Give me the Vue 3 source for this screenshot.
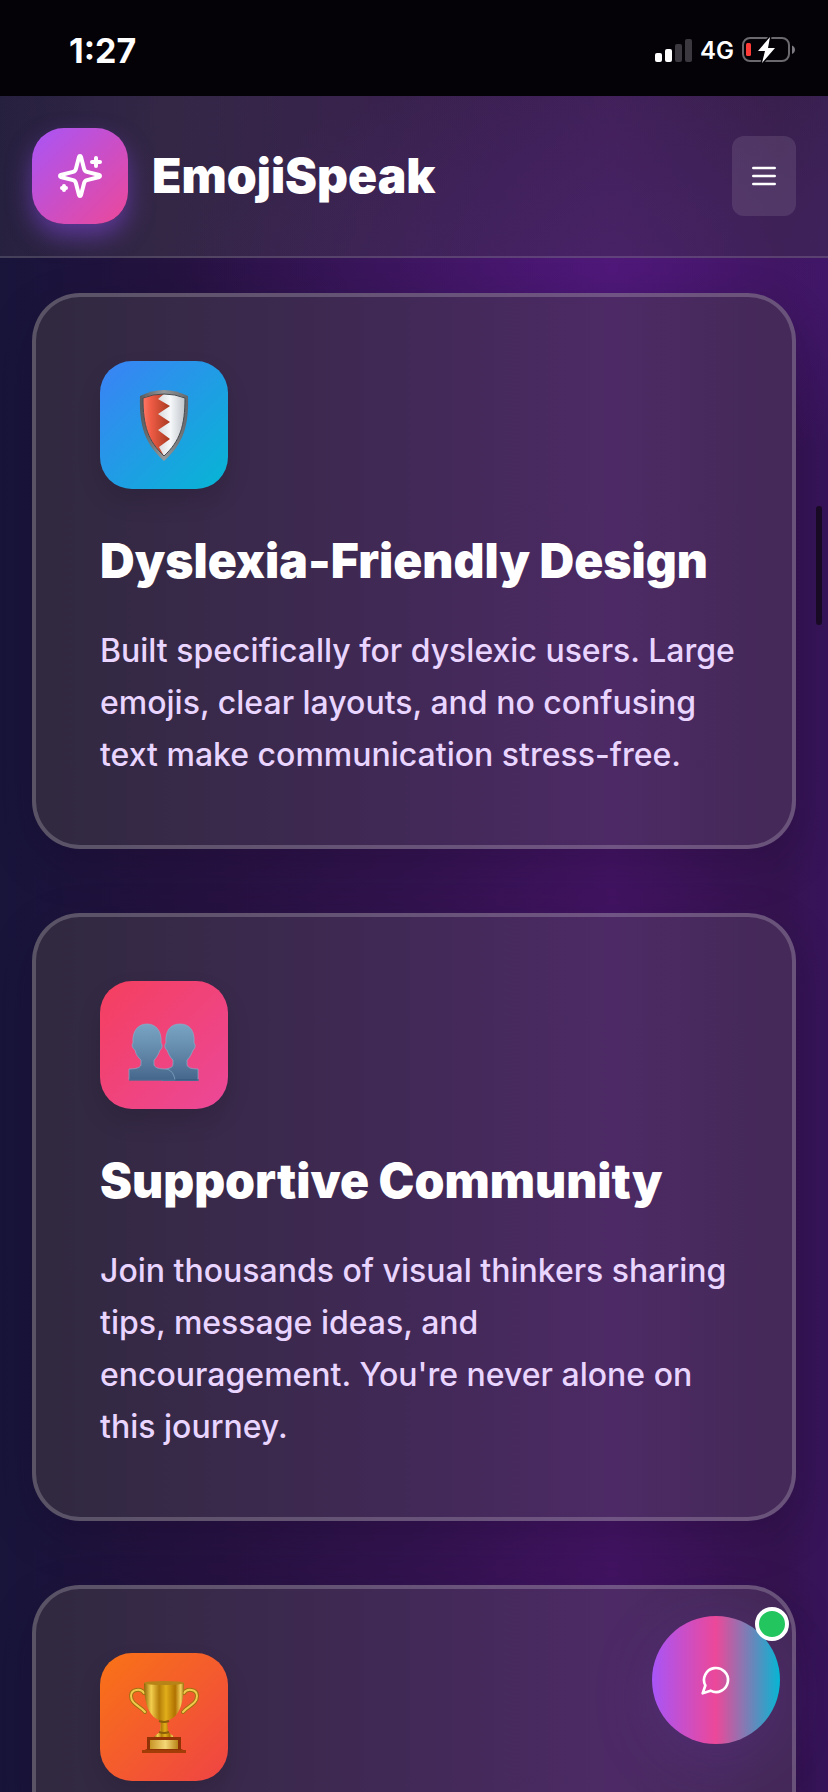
<script setup>
const features = [
  {
    icon: 'shield',
    title: 'Dyslexia-Friendly Design',
    text: 'Built specifically for dyslexic users. Large emojis, clear layouts, and no confusing text make communication stress-free.'
  },
  {
    icon: 'people',
    title: 'Supportive Community',
    text: "Join thousands of visual thinkers sharing tips, message ideas, and encouragement. You're never alone on this journey."
  },
  {
    icon: 'trophy'
  }
]
</script>

<template>
  <div class="app">
    <div class="status-bar">
      <span class="time">1:27</span>
      <div class="status-right">
        <svg class="signal" viewBox="0 0 37 24">
          <rect x="0" y="15" width="7" height="9" rx="2" fill="#fff" />
          <rect x="10" y="11" width="7" height="13" rx="2" fill="#fff" />
          <rect x="20" y="6" width="7" height="18" rx="2" fill="#3b393f" />
          <rect x="30" y="1" width="7" height="23" rx="2" fill="#3b393f" />
        </svg>
        <span class="network">4G</span>
        <svg class="battery" viewBox="0 0 54 28">
          <rect x="1" y="2" width="46" height="23" rx="7" fill="none" stroke="#6b696e" stroke-width="2" />
          <path d="M50 9.5c4 1.5 4 7 0 8.5z" fill="#7c7a80" />
          <rect x="4" y="7" width="5" height="13" rx="1.5" fill="#ff3b38" />
          <path
            d="M28 1 16 15h7l-3 12 13-15h-7z"
            fill="#fff"
            stroke="#050308"
            stroke-width="3"
            stroke-linejoin="round"
            paint-order="stroke"
          />
        </svg>
      </div>
    </div>

    <header class="header">
      <div class="brand">
        <div class="logo">
          <svg viewBox="0 0 24 24" class="line-icon logo-icon">
            <path d="M9.937 15.5A2 2 0 0 0 8.5 14.063l-6.135-1.582a.5.5 0 0 1 0-.962L8.5 9.936A2 2 0 0 0 9.937 8.5l1.582-6.135a.5.5 0 0 1 .963 0L14.063 8.5A2 2 0 0 0 15.5 9.937l6.135 1.581a.5.5 0 0 1 0 .964L15.5 14.063a2 2 0 0 0-1.437 1.437l-1.582 6.135a.5.5 0 0 1-.963 0z" />
            <path d="M20 3v4M22 5h-4M4 17v2M5 18H3" />
          </svg>
        </div>
        <span class="brand-name">EmojiSpeak</span>
      </div>
      <button class="menu-btn" type="button" aria-label="Open menu">
        <svg viewBox="0 0 24 24" class="line-icon">
          <path d="M4 6h16M4 12h16M4 18h16" />
        </svg>
      </button>
    </header>

    <main class="features">
      <article v-for="feature in features" :key="feature.icon" class="card">
        <div class="tile" :class="feature.icon">
          <svg v-if="feature.icon === 'shield'" viewBox="0 0 72 72">
            <defs>
              <linearGradient id="rim" x1="0" x2="1">
                <stop offset="0" stop-color="#575b5e" />
                <stop offset=".5" stop-color="#96989a" />
                <stop offset="1" stop-color="#63676b" />
              </linearGradient>
              <linearGradient id="red" x1="0" x2="1">
                <stop offset="0" stop-color="#ff7765" />
                <stop offset=".3" stop-color="#ee5b45" />
                <stop offset="1" stop-color="#a83a20" />
              </linearGradient>
              <linearGradient id="silver" x1="0" x2="1">
                <stop offset="0" stop-color="#b4b7ba" />
                <stop offset=".65" stop-color="#f6f8fa" />
                <stop offset="1" stop-color="#bfc4ca" />
              </linearGradient>
            </defs>
            <path d="M12 7Q24 1 36 1t24 6c1 30-5 48-24 65C17 55 11 37 12 7z" fill="url(#rim)" />
            <path d="M15 9q10-4 21-4t21 4c0 28-5 43-21 58C20 52 15 37 15 9z" fill="url(#silver)" />
            <path d="M15 9q10-4 21-4l-6 5 12 7-12 8 12 8-12 8 12 9-11 8 5 9C20 52 15 37 15 9z" fill="url(#red)" />
            <path d="M15 9q10-4 21-4t21 4c0 28-5 43-21 58C20 52 15 37 15 9z" fill="none" stroke="#454b50" />
          </svg>

          <svg v-else-if="feature.icon === 'people'" viewBox="0 0 72 72">
            <defs>
              <linearGradient id="bust" x1="0" y1="15" x2="0" y2="72" gradientUnits="userSpaceOnUse">
                <stop offset="0" stop-color="#79a4c3" />
                <stop offset=".5" stop-color="#6288a9" />
                <stop offset="1" stop-color="#44658a" />
              </linearGradient>
            </defs>
            <g fill="url(#bust)" stroke="#87adca" stroke-width=".7">
              <path d="M38 60c5-1 7-2 7-5v-4c-3-3-4-5-6-10-2-1-3-5-1-7-1-12 4-19 14-19s15 7 14 19c2 2 1 6-1 7-2 5-3 7-6 10v5c1 3 5 4 11 4v12H34z" />
              <path d="M1 60c6 0 11-1 12-4v-5c-3-3-5-5-6-10-2-1-4-5-2-7-1-12 5-19 14-19s15 7 14 19c2 2 1 6-1 7-2 5-3 7-6 10v5c1 3 6 4 11 4 6 0 9 5 10 11H1z" />
            </g>
            <path d="M1 71h70" stroke="#35577c" />
          </svg>

          <svg v-else viewBox="0 0 72 72">
            <defs>
              <linearGradient id="gold" x1="0" x2="1">
                <stop offset="0" stop-color="#8f6408" />
                <stop offset=".18" stop-color="#f4cf4e" />
                <stop offset=".38" stop-color="#b57e09" />
                <stop offset=".55" stop-color="#e1ae1a" />
                <stop offset=".78" stop-color="#b07200" />
                <stop offset=".92" stop-color="#f2cf5a" />
                <stop offset="1" stop-color="#976a0d" />
              </linearGradient>
              <linearGradient id="plate" x1="0" x2="1">
                <stop offset="0" stop-color="#c79426" />
                <stop offset=".55" stop-color="#f4d777" />
                <stop offset="1" stop-color="#b98317" />
              </linearGradient>
            </defs>
            <g fill="none" stroke-linecap="round">
              <path d="M16 12c-3-5-13-4-13 3 0 8 9 10 14 16M56 12c3-5 13-4 13 3 0 8-9 10-14 16" stroke="#9e7210" stroke-width="4" />
              <path d="M16 12c-3-5-13-4-13 3 0 8 9 10 14 16M56 12c3-5 13-4 13 3 0 8-9 10-14 16" stroke="#f0ca4a" stroke-width="2" />
            </g>
            <path d="M33 38h6l1 12c1 3 6 4 6 7H26c0-3 5-4 6-7z" fill="url(#gold)" />
            <path d="M16 2h40c0 18-4 33-15 37H31C20 35 16 20 16 2z" fill="url(#gold)" />
            <ellipse cx="36" cy="2" rx="20" ry="2" fill="#b78418" />
            <path d="M31 40q5 2 10 0M31 51q5 2 10 0" fill="none" stroke="#8b5e09" stroke-width="2" />
            <path d="M19 56h34v12l5 2v2H14v-2l5-2z" fill="#8f3205" />
            <path d="M14 69h44v3H14z" fill="#a23d08" />
            <path d="M22 59h28v9H22z" fill="url(#plate)" />
          </svg>
        </div>
        <h2 v-if="feature.title">{{ feature.title }}</h2>
        <p v-if="feature.text">{{ feature.text }}</p>
      </article>
    </main>

    <div class="scroll-thumb"></div>

    <button class="chat-btn" type="button" aria-label="Open chat">
      <svg viewBox="0 0 24 24" class="line-icon">
        <path d="M7.9 20A9 9 0 1 0 4 16.1L2 22Z" />
      </svg>
      <span class="online-dot"></span>
    </button>
  </div>
</template>

<style>
body {
  margin: 0;
  background: #17122f;
}
</style>

<style scoped>
.app {
  height: 100vh;
  overflow: hidden;
  font-family: Inter, "Liberation Sans", sans-serif;
  color: #fff;
  background:
    radial-gradient(ellipse 440px 200px at 74% 270px, rgba(91, 28, 145, 0.5), transparent),
    linear-gradient(90deg, #18143a 0%, #24123f 20%, #32134e 48%, #431463 74%, #35134f 94%, #37145b 100%);
}

.status-bar {
  display: flex;
  align-items: center;
  justify-content: space-between;
  height: 96px;
  padding: 4px 32px 0 69px;
  box-sizing: border-box;
  background: #040207;
}

.time {
  font-size: 34px;
  font-weight: 700;
}

.status-right {
  display: flex;
  align-items: center;
  gap: 8px;
}

.signal {
  width: 37px;
  height: 24px;
}

.network {
  font-size: 24px;
  font-weight: 600;
}

.battery {
  width: 54px;
  height: 28px;
}

.header {
  display: flex;
  align-items: center;
  justify-content: space-between;
  padding: 32px;
  background: linear-gradient(100deg, rgba(60, 50, 70, 0.4), rgba(75, 70, 80, 0.4) 20%, rgba(62, 50, 75, 0.4) 60%, rgba(60, 50, 70, 0.4));
  border-bottom: 2px solid rgba(255, 255, 255, 0.14);
}

.brand {
  display: flex;
  align-items: center;
  gap: 24px;
}

.logo {
  display: flex;
  align-items: center;
  justify-content: center;
  width: 96px;
  height: 96px;
  border-radius: 32px;
  background: linear-gradient(135deg, #a855f7, #ec4899);
  box-shadow: 0 12px 24px rgba(140, 75, 235, 0.5);
}

.line-icon {
  width: 32px;
  height: 32px;
  fill: none;
  stroke: #fff;
  stroke-width: 2;
  stroke-linecap: round;
  stroke-linejoin: round;
}

.logo-icon {
  width: 48px;
  height: 48px;
}

.brand-name {
  font-size: 48px;
  line-height: 64px;
  font-weight: 900;
}

.menu-btn {
  display: flex;
  align-items: center;
  justify-content: center;
  width: 64px;
  height: 80px;
  padding: 0;
  border: none;
  border-radius: 12px;
  background: rgba(255, 255, 255, 0.1);
  cursor: pointer;
}

.features {
  display: flex;
  flex-direction: column;
  gap: 64px;
  padding: 35px 32px 64px;
}

.card {
  padding: 64px 56px 64px 64px;
  border: 4px solid rgba(255, 255, 255, 0.2);
  border-radius: 48px;
  background: linear-gradient(90deg, #30293f 0%, #3b294d 30%, #432959 54%, #4d2a65 76%, #452959 96%) border-box;
  box-shadow: 0 16px 48px rgba(15, 5, 30, 0.2);
}

.tile {
  display: flex;
  align-items: center;
  justify-content: center;
  width: 128px;
  height: 128px;
  border-radius: 32px;
  box-shadow: 0 12px 24px rgba(0, 0, 0, 0.12);
}

.tile svg {
  width: 72px;
  height: 72px;
}

.shield {
  background: linear-gradient(135deg, #3b82f6, #06b6d4);
}

.people {
  background: linear-gradient(135deg, #f43f5e, #ec4899);
}

.trophy {
  background: linear-gradient(135deg, #f97316, #ef4444);
}

h2 {
  margin: 40px 0 32px;
  font-size: 48px;
  line-height: 64px;
  font-weight: 900;
}

p {
  margin: 0;
  color: #e9d5ff;
  font-size: 32px;
  line-height: 52px;
  font-weight: 500;
}

.scroll-thumb {
  position: fixed;
  top: 506px;
  right: 6px;
  width: 6px;
  height: 119px;
  border-radius: 3px;
  background: #180a25;
}

.chat-btn {
  position: fixed;
  right: 48px;
  bottom: 48px;
  display: flex;
  align-items: center;
  justify-content: center;
  width: 128px;
  height: 128px;
  padding: 0;
  border: none;
  border-radius: 50%;
  background: linear-gradient(90deg, #a855f7, #ec4899 50%, #06b6d4);
  box-shadow: 0 16px 64px rgba(120, 60, 200, 0.2);
  cursor: pointer;
}

.online-dot {
  position: absolute;
  top: -9px;
  right: -9px;
  width: 26px;
  height: 26px;
  border: 4px solid #fff;
  border-radius: 50%;
  background: #22c55e;
}
</style>
